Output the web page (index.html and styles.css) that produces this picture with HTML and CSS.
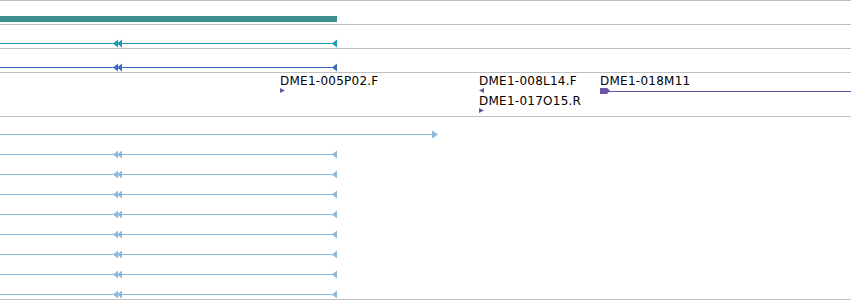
FILE: index.html
```html
<!DOCTYPE html>
<html lang="en">
<head>
    <meta charset="UTF-8">
    <title>Track view</title>
    <link rel="stylesheet" href="styles.css">
</head>
<body>
    <div class="tracks">
        <!-- contig bar -->
        <div class="track track-short">
            <svg width="851" height="23"><rect x="0" y="15" width="337" height="6" fill="#3f8f8f"/></svg>
        </div>

        <!-- aligned transcript -->
        <div class="track track-short">
            <svg width="851" height="23" class="feat-cyan">
                <line x1="0" y1="18.5" x2="337" y2="18.5"/>
                <polygon points="113,18.5 118,14.5 118,22.5"/>
                <polygon points="117,18.5 122,14.5 122,22.5"/>
                <polygon points="332,18.5 337,14.5 337,22.5"/>
            </svg>
        </div>

        <div class="track track-short">
            <svg width="851" height="23" class="feat-blue">
                <line x1="0" y1="18.5" x2="337" y2="18.5"/>
                <polygon points="113,18.5 118,14.5 118,22.5"/>
                <polygon points="117,18.5 122,14.5 122,22.5"/>
                <polygon points="332,18.5 337,14.5 337,22.5"/>
            </svg>
        </div>

        <!-- clone ends -->
        <div class="track track-clones">
            <span class="label" style="left: 280px; top: 0px;">DME1-005P02.F</span>
            <span class="label" style="left: 479px; top: 0px;">DME1-008L14.F</span>
            <span class="label" style="left: 479px; top: 20px;">DME1-017O15.R</span>
            <span class="label" style="left: 600px; top: 0px;">DME1-018M11</span>
            <svg width="851" height="43" class="feat-purple">
                <polygon points="280,15 285,17.5 280,20"/>
                <polygon points="484,15 479,17.5 484,20"/>
                <polygon points="479,35 484,37.5 479,40"/>
                <polygon points="600,15 607,15 610,17.5 607,21 600,21"/>
                <line x1="606" y1="18.5" x2="851" y2="18.5"/>
            </svg>
        </div>

        <!-- ESTs -->
        <div class="track track-ests">
            <svg width="851" height="182" class="feat-light">
                <defs>
                    <g id="est-rev">
                        <line x1="0" y1="17.5" x2="337" y2="17.5"/>
                        <polygon points="113,17.5 118,13.5 118,21.5"/>
                        <polygon points="117,17.5 122,13.5 122,21.5"/>
                        <polygon points="332,17.5 337,13.5 337,21.5"/>
                    </g>
                </defs>
                <line x1="0" y1="17.5" x2="437" y2="17.5"/>
                <polygon points="438,17.5 432,13.5 432,21.5"/>
                <use href="#est-rev" y="20"/>
                <use href="#est-rev" y="40"/>
                <use href="#est-rev" y="60"/>
                <use href="#est-rev" y="80"/>
                <use href="#est-rev" y="100"/>
                <use href="#est-rev" y="120"/>
                <use href="#est-rev" y="140"/>
                <use href="#est-rev" y="160"/>
            </svg>
        </div>
    </div>
</body>
</html>
```

FILE: styles.css
```css
body {
    margin: 0;
    background: #fff;
    font-family: "DejaVu Sans", Verdana, sans-serif;
    overflow: hidden;
}
.tracks {
    width: 851px;
    border-top: 1px solid #c0c0c0;
}
.track {
    position: relative;
    border-bottom: 1px solid #c0c0c0;
}
.track svg {
    display: block;
}
.track-short {
    height: 23px;
}
.track-clones {
    height: 43px;
}
.track-ests {
    height: 182px;
}
.label {
    position: absolute;
    font-size: 12px;
    line-height: 16px;
    letter-spacing: 0.25px;
    color: #000;
    white-space: nowrap;
}
.feat-cyan line { stroke: #1d98b2; stroke-width: 1; }
.feat-cyan polygon { fill: #1d98b2; }
.feat-blue line { stroke: #3a6cc6; stroke-width: 1; }
.feat-blue polygon { fill: #3a6cc6; }
.feat-purple line { stroke: #6a55a8; stroke-width: 1; }
.feat-purple polygon { fill: #6a55a8; }
.feat-light line { stroke: #8cbadc; stroke-width: 1; }
.feat-light polygon { fill: #8cbadc; }
```
